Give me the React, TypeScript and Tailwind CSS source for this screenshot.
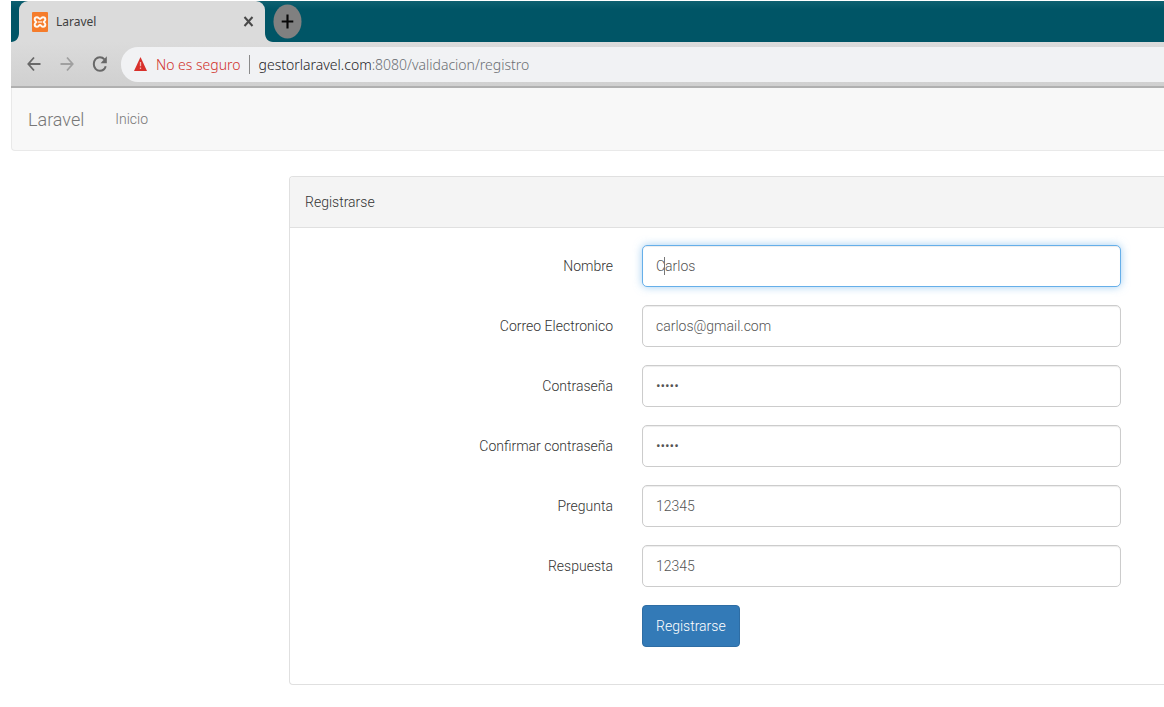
import { useEffect, useRef } from "react";

type Field = {
  id: string;
  label: string;
  value: string;
  type: "text" | "email" | "password";
};

const fields: Field[] = [
  { id: "nombre", label: "Nombre", value: "Carlos", type: "text" },
  { id: "correo", label: "Correo Electronico", value: "carlos@gmail.com", type: "email" },
  { id: "clave", label: "Contraseña", value: "12345", type: "password" },
  { id: "confirmar", label: "Confirmar contraseña", value: "12345", type: "password" },
  { id: "pregunta", label: "Pregunta", value: "12345", type: "text" },
  { id: "respuesta", label: "Respuesta", value: "12345", type: "text" },
];

function XamppIcon() {
  return (
    <svg width="16" height="20" viewBox="0 0 16 20" preserveAspectRatio="none" aria-hidden="true">
      <rect width="16" height="20" rx="1" fill="#f57c2b" />
      <path
        d="M5 5.2C3.2 5.2 2.7 6.2 2.7 7.4C2.7 8.8 3.6 9 4.2 10C3.6 11 2.7 11.2 2.7 12.6C2.7 13.8 3.2 14.8 5 14.8C6.6 14.8 6.8 13 8 13C9.2 13 9.4 14.8 11 14.8C12.8 14.8 13.3 13.8 13.3 12.6C13.3 11.2 12.4 11 11.8 10C12.4 9 13.3 8.8 13.3 7.4C13.3 6.2 12.8 5.2 11 5.2C9.4 5.2 9.2 7 8 7C6.8 7 6.6 5.2 5 5.2Z"
        fill="none"
        stroke="#fff8f0"
        strokeWidth="2"
      />
      <path d="M5.8 10H10.2" fill="none" stroke="#fff8f0" strokeWidth="1.2" />
    </svg>
  );
}

function TabStrip() {
  return (
    <div className="flex h-[41px] items-start bg-[#005566] bg-linear-to-b from-[#0f6070] from-0% to-[#005566] to-20%">
      <div className="flex h-[41px] items-end">
        <svg width="8" height="41" viewBox="0 0 8 41" aria-hidden="true">
          <path d="M8 0V32C8 37 5 41 0 41H8Z" fill="#dbdbdb" />
        </svg>
        <div className="flex h-[41px] w-[246px] items-center rounded-t-[9px] bg-[#dbdbdb] pr-[11px] pl-[13px] font-['Noto_Sans',sans-serif] text-[12px] font-normal text-[#404040]">
          <XamppIcon />
          <span className="ml-2">Laravel</span>
          <button type="button" aria-label="Cerrar pestaña" className="ml-auto">
            <svg width="11" height="13" viewBox="0 0 11 13" aria-hidden="true">
              <path d="M1.5 2L9.5 11M9.5 2L1.5 11" stroke="#484848" strokeWidth="2" />
            </svg>
          </button>
        </div>
        <svg width="8" height="41" viewBox="0 0 8 41" aria-hidden="true">
          <path d="M0 0V32C0 37 3 41 8 41H0Z" fill="#dbdbdb" />
        </svg>
      </div>
      <button type="button" aria-label="Nueva pestaña" className="mt-[3px]">
        <svg width="29" height="35" viewBox="0 0 30 35" preserveAspectRatio="none" aria-hidden="true">
          <ellipse cx="15" cy="17.5" rx="14.5" ry="17" fill="#808080" />
          <path d="M9 17.5H21M15 10.5V24.5" stroke="#080808" strokeWidth="2.2" />
        </svg>
      </button>
    </div>
  );
}

function Toolbar() {
  return (
    <div className="flex h-[46px] items-center border-b-2 border-[#b0b0b0] bg-[#d6d6d6] bg-linear-to-b from-[#dbdbdb] to-[#d0d0d0] pl-4">
      <button type="button" aria-label="Atrás">
        <svg width="14" height="18" viewBox="0 0 14 18" aria-hidden="true">
          <path d="M13.5 9H1.5M7 2.5L1.3 9L7 15.5" fill="none" stroke="#686868" strokeWidth="1.8" />
        </svg>
      </button>
      <button type="button" aria-label="Adelante" className="ml-[19px]">
        <svg width="14" height="18" viewBox="0 0 14 18" aria-hidden="true">
          <path d="M0.5 9H12.5M7 2.5L12.7 9L7 15.5" fill="none" stroke="#a0a0a0" strokeWidth="1.8" />
        </svg>
      </button>
      <button type="button" aria-label="Recargar" className="ml-[18px]">
        <svg width="16" height="18" viewBox="0 0 16 18" aria-hidden="true">
          <path d="M12.4 4.3C11.3 3 9.7 2.2 7.9 2.2C4.4 2.2 1.8 5.2 1.8 9C1.8 12.8 4.4 15.8 7.9 15.8C10.6 15.8 12.9 14 13.7 11.3" fill="none" stroke="#686868" strokeWidth="2" />
          <path d="M14.8 1.2V8.2H8.6Z" fill="#686868" />
        </svg>
      </button>
      <div className="ml-[13px] flex h-[35px] min-w-0 flex-1 items-center rounded-l-[17px] bg-[#f1f2f4] pl-[13px] font-['Noto_Sans',sans-serif] text-[14px] whitespace-nowrap">
        <svg width="13" height="14" viewBox="0 0 14 14" preserveAspectRatio="none" aria-hidden="true">
          <path d="M7 0L14 14H0Z" fill="#d8302b" />
          <path d="M7 5V9.2M7 10.4V12" stroke="#f4b5b0" strokeWidth="1.4" />
        </svg>
        <span className="ml-[9px] text-[#d02f29]">No es seguro</span>
        <span className="mr-[9px] ml-2 h-[19px] w-px bg-[#8a8a8a]" />
        <span className="text-[#1f2327]">
          gestorlaravel.com<span className="text-[#6b6f73]">:8080/validacion/registro</span>
        </span>
      </div>
    </div>
  );
}

export default function App() {
  const firstInput = useRef<HTMLInputElement>(null);

  useEffect(() => {
    firstInput.current?.focus();
  }, []);

  return (
    <div className="min-h-screen overflow-hidden bg-white pt-px pl-[11px] font-[Roboto,sans-serif] text-[14px] font-light text-[#555]">
      <header>
        <TabStrip />
        <Toolbar />
      </header>
      <nav className="flex h-[63px] items-center rounded-bl-[4px] border-b border-l border-[#e9e9e9] bg-[#f8f8f8] pl-4 text-[#777]">
        <a href="#laravel" className="text-[18px]">Laravel</a>
        <a href="#inicio" className="ml-[31px]">Inicio</a>
      </nav>
      <main className="mt-[25px] ml-[278px] rounded-l-[4px] border-y border-l border-[#e0e0e0]">
        <h1 className="flex h-[51px] items-center rounded-tl-[3px] border-b border-[#e0e0e0] bg-[#f4f4f4] pl-[15px] text-[#333]">
          Registrarse
        </h1>
        <form className="grid gap-[18px] pt-[17px] pr-[43px] pb-[37px]" onSubmit={(e) => e.preventDefault()}>
          {fields.map((f, i) => (
            <div key={f.id} className="grid grid-cols-[323px_1fr] items-center gap-[29px]">
              <label htmlFor={f.id} className="text-right text-[#333]">
                {f.label}
              </label>
              <div className="relative">
                <input
                  id={f.id}
                  ref={i === 0 ? firstInput : undefined}
                  type={f.type}
                  defaultValue={f.value}
                  className="block h-[42px] w-full min-w-0 rounded-[5px] border border-[#ccc] bg-white px-[13px] text-[#555] shadow-[inset_0_1px_1px_rgba(0,0,0,0.075)] outline-none focus:border-[#66afe9] focus:shadow-[inset_0_1px_1px_rgba(0,0,0,0.075),0_0_8px_rgba(102,175,233,0.6)]"
                />
                {i === 0 && (
                  <span className="pointer-events-none absolute top-[12px] left-[22px] h-[18px] w-px bg-[#777]" />
                )}
              </div>
            </div>
          ))}
          <div className="pl-[352px]">
            <button type="submit" className="h-[42px] rounded-[4px] border border-[#2e6da4] bg-[#337ab7] px-[13px] text-white">
              Registrarse
            </button>
          </div>
        </form>
      </main>
    </div>
  );
}
